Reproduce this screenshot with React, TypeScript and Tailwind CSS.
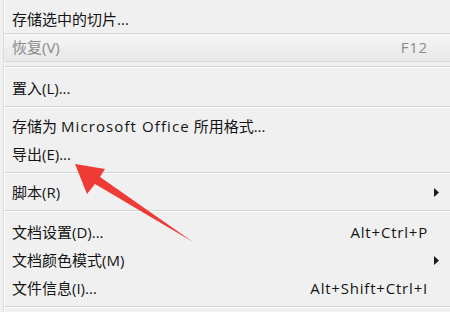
import React from 'react';

type Item = {
  label: React.ReactNode;
  shortcut?: string;
  submenu?: boolean;
  disabled?: boolean;
  hover?: boolean;
};

const Row: React.FC<Item> = ({ label, shortcut, submenu, disabled, hover }) => (
  <div
    className={
      'flex items-center h-[28px] pl-[8px] pr-[22px] ' +
      (hover
        ? 'bg-gradient-to-b from-[#f6f6f6] to-[#e7e7e7] border-y border-[#d6d6d6] h-[29px]'
        : '')
    }
  >
    <span className={'flex-1 ' + (disabled ? 'text-[#8b8b8b]' : 'text-[#141414]')}>{label}</span>
    {shortcut && (
      <span className={'tracking-[0.8px] ' + (disabled ? 'text-[#8b8b8b]' : 'text-[#141414]')}>
        {shortcut}
      </span>
    )}
    {submenu && (
      <svg width="6" height="9" viewBox="0 0 6 9" className="-mr-[12px]">
        <path d="M0 0 L5 4.5 L0 9 Z" fill="#1b1b1b" />
      </svg>
    )}
  </div>
);

const Sep: React.FC<{ top: string }> = ({ top }) => (
  <div className={top}>
    <div className="h-px bg-[#d5d5d5]" />
    <div className="h-px bg-white" />
  </div>
);

export default function App() {
  return (
    <div
      className="relative w-[450px] h-[312px] overflow-hidden bg-[#f0f0f0] text-[15px] leading-none"
      style={{ fontFamily: '"Open Sans", "Noto Sans CJK SC", sans-serif' }}
    >
      <div className="ml-[3px] h-full border-l border-[#dcdcdc] shadow-[inset_1px_0_0_#ffffff]">
        <div className="pt-[5px]" />
        <Row label="存储选中的切片..." />
        <Row label="恢复(V)" shortcut="F12" disabled hover />
        <Sep top="pt-[4px] pb-[6px]" />
        <Row label="置入(L)..." />
        <Sep top="pt-[4px] pb-[4px]" />
        <Row
          label={
            <>
              存储为 <span className="tracking-[1.1px]">Microsoft Office</span> 所用格式...
            </>
          }
        />
        <Row label="导出(E)..." />
        <Sep top="pt-[4px] pb-[4px]" />
        <Row label="脚本(R)" submenu />
        <Sep top="pt-[4px] pb-[6px]" />
        <Row label="文档设置(D)..." shortcut="Alt+Ctrl+P" />
        <Row label="文档颜色模式(M)" submenu />
        <Row label="文件信息(I)..." shortcut="Alt+Shift+Ctrl+I" />
        <Sep top="pt-[4px] pb-[4px]" />
      </div>

      {/* red annotation arrow */}
      <svg className="absolute left-0 top-0" width="450" height="312" viewBox="0 0 450 312">
        <polygon
          points="75,164 105,169 100,177 193,242 95,184 87,194"
          fill="#ee3b36"
        />
      </svg>
    </div>
  );
}
